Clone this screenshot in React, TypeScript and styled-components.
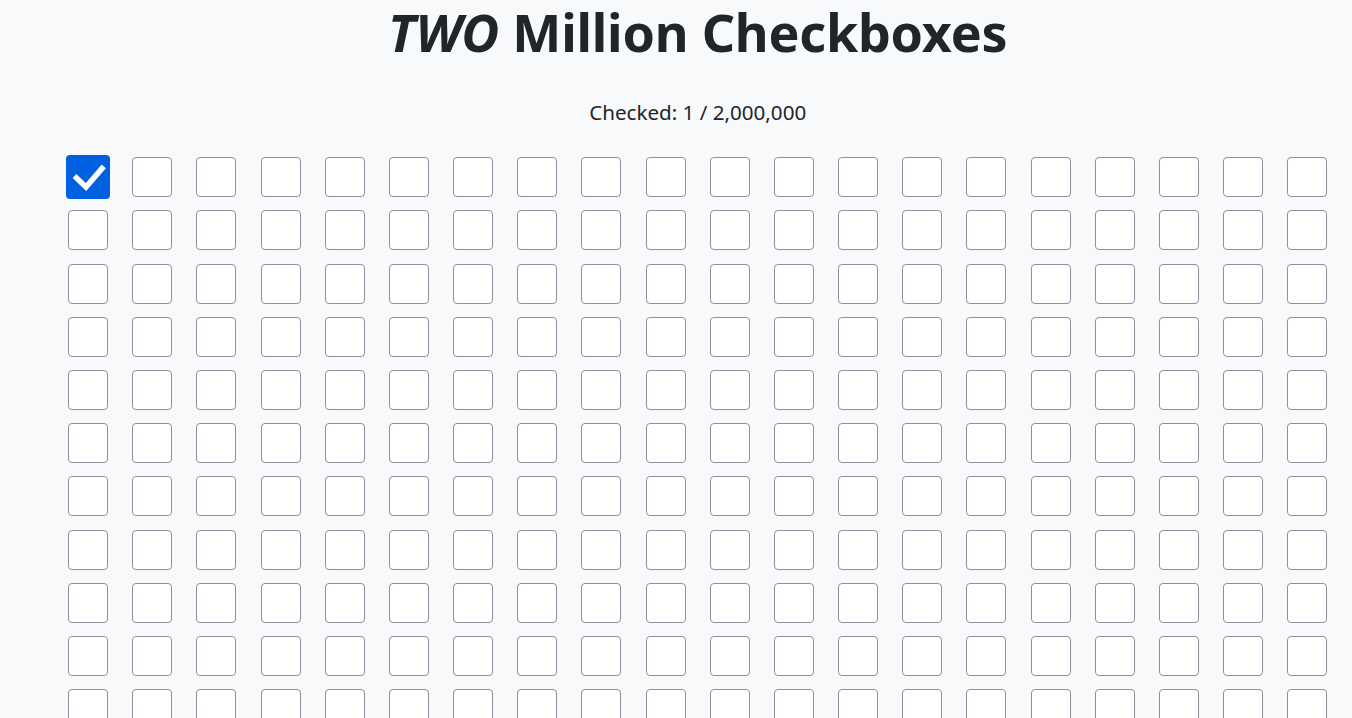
import React, { useState } from "react";
import styled, { createGlobalStyle } from "styled-components";

const Global = createGlobalStyle`
  html, body { margin: 0; padding: 0; overflow: hidden; }
  body {
    background: #f8f9fa;
    color: #212529;
    font-family: "Noto Sans", "Open Sans", "Liberation Sans", sans-serif;
  }
`;

const Page = styled.main`
  display: flex;
  flex-direction: column;
  align-items: center;
  width: 1283.4px;
  margin-left: 56px;
  height: 718px;
`;

const Title = styled.h1`
  margin: 0;
  font-size: 52px;
  font-weight: 700;
  line-height: 64px;
  letter-spacing: -0.2px;
  em { font-style: italic; }
`;

const Counter = styled.p`
  margin: 34.5px 0 0;
  font-size: 20.6px;
  line-height: 26px;
`;

const Grid = styled.div`
  align-self: stretch;
  margin-top: 32.8px;
  display: grid;
  grid-template-columns: repeat(20, 1fr);
  grid-auto-rows: 53.2px;
`;

const Cell = styled.label`
  display: flex;
  justify-content: center;
  align-items: flex-start;
`;

const Box = styled.span<{ $checked: boolean }>`
  position: relative;
  box-sizing: border-box;
  width: ${(p) => (p.$checked ? 44 : 40)}px;
  height: ${(p) => (p.$checked ? 44 : 40)}px;
  margin-top: ${(p) => (p.$checked ? -2 : 0)}px;
  border-radius: 4px;
  border: ${(p) => (p.$checked ? "none" : "1px solid #8f8f9d")};
  background: ${(p) => (p.$checked ? "#0060df" : "#ffffff")};
  display: flex;
  align-items: center;
  justify-content: center;
  cursor: pointer;
  input {
    position: absolute;
    opacity: 0;
    width: 100%;
    height: 100%;
    margin: 0;
    cursor: pointer;
  }
`;

const Check = () => (
  <svg width="44" height="44" viewBox="0 0 44 44" aria-hidden="true">
    <path
      d="M10.5 23 L20 32 L36 13.5"
      fill="none"
      stroke="#ffffff"
      strokeWidth="5.5"
      strokeLinecap="square"
      strokeLinejoin="miter"
    />
  </svg>
);

const COLS = 20;
const ROWS = 11;

export default function App() {
  const [checked, setChecked] = useState<Set<number>>(() => new Set([0]));
  const toggle = (i: number) =>
    setChecked((prev) => {
      const next = new Set(prev);
      if (next.has(i)) next.delete(i);
      else next.add(i);
      return next;
    });

  return (
    <>
      <Global />
      <Page>
        <Title>
          <em>TWO</em> Million Checkboxes
        </Title>
        <Counter>
          Checked: {checked.size.toLocaleString("en-US")} / 2,000,000
        </Counter>
        <Grid>
          {Array.from({ length: COLS * ROWS }, (_, i) => {
            const on = checked.has(i);
            return (
              <Cell key={i}>
                <Box $checked={on}>
                  <input type="checkbox" checked={on} onChange={() => toggle(i)} />
                  {on && <Check />}
                </Box>
              </Cell>
            );
          })}
        </Grid>
      </Page>
    </>
  );
}
